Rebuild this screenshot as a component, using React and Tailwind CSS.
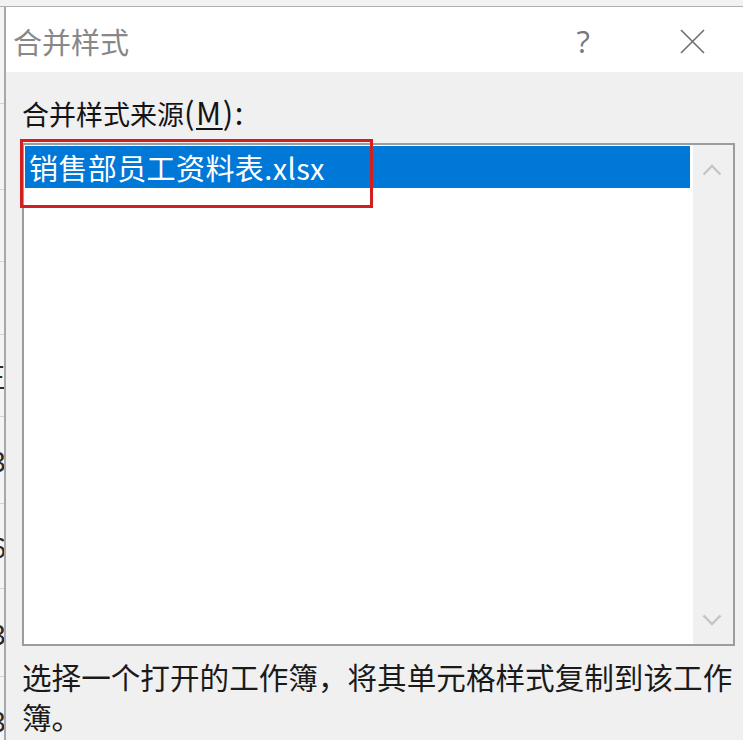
import React from "react";

const cjk = { fontFamily: '"Noto Sans CJK SC", "Noto Sans", sans-serif' };

function SheetStrip() {
  const rows = [
    { h: 97, t: "" },
    { h: 86, t: "" },
    { h: 72, t: "" },
    { h: 73, t: "" },
    { h: 82, t: "王" },
    { h: 87, t: "3" },
    { h: 85, t: "6" },
    { h: 88, t: "3" },
    { h: 87, t: "3" },
  ];
  return (
    <div className="w-[4px] shrink-0 flex flex-col bg-[#f4f4f4] overflow-hidden">
      {rows.map((r, i) => (
        <div
          key={i}
          style={{ height: r.h }}
          className="shrink-0 flex items-center justify-end overflow-hidden border-b border-[#d4d4d4] text-[28px] text-[#2a2a2a] leading-none"
        >
          <span className="shrink-0 mr-[-2px]">{r.t}</span>
        </div>
      ))}
    </div>
  );
}

function Chevron({ up }) {
  return (
    <svg width="20" height="12" viewBox="0 0 20 12" fill="none">
      <path
        d={up ? "M1.5 10.5 L10 2 L18.5 10.5" : "M1.5 1.5 L10 10 L18.5 1.5"}
        stroke="#c4c4c4"
        strokeWidth="2.4"
      />
    </svg>
  );
}

export default function App() {
  return (
    <div className="w-[743px] h-[740px] overflow-hidden flex flex-col bg-[#f0f0f0]" style={cjk}>
      <div className="h-[7px] shrink-0 bg-[#f2f2f2] border-b border-[#b0b0b0]" />
      <div className="flex flex-1 min-h-0">
        <SheetStrip />
        <div className="flex-1 flex flex-col border-l-[2px] border-[#a8a8a8] bg-[#f0f0f0] relative">
          {/* title bar */}
          <div className="h-[65px] shrink-0 bg-white flex items-center pl-[7px] pr-[38px] pt-[3px]">
            <div className="flex-1 text-[29px] leading-none text-[#888888]">合并样式</div>
            <div
              className="text-[31px] leading-none text-[#777777] mr-[90px]"
              style={{ fontFamily: '"Open Sans", "Noto Sans", sans-serif' }}
            >
              ?
            </div>
            <svg width="25" height="25" viewBox="0 0 25 25" fill="none">
              <path d="M1 1 L24 24 M24 1 L1 24" stroke="#6e6e6e" strokeWidth="1.6" />
            </svg>
          </div>
          {/* body */}
          <div className="flex-1 flex flex-col pl-[16px]">
            <div className="mt-[25px] h-[30px] leading-[30px] text-[27px] text-[#141414] whitespace-nowrap">
              合并样式来源
              <span className="text-[31px] tracking-[1.5px]">
                (<span className="underline underline-offset-[3px] decoration-[2px]">M</span>):
              </span>
            </div>
            <div className="mt-[16px] w-[713px] h-[503px] border-[2px] border-[#9c9c9c] bg-white flex">
              <div className="flex-1 pt-[1px] pl-[1px] pr-[3px]">
                <div className="h-[42px] bg-[#0078d7] text-white text-[29px] leading-[42px] pl-[4px] tracking-[0.4px]">
                  销售部员工资料表.xlsx
                </div>
              </div>
              <div className="w-[40px] bg-[#f0f0f0] flex flex-col justify-between">
                <div className="h-[50px] flex items-center justify-center pr-[2px]">
                  <Chevron up />
                </div>
                <div className="h-[48px] flex items-center justify-center pr-[2px]">
                  <Chevron />
                </div>
              </div>
            </div>
            <div className="mt-[11px] w-[720px] text-[29.6px] leading-[40px] text-[#1a1a1a]">
              选择一个打开的工作簿，将其单元格样式复制到该工作簿。
            </div>
          </div>
          {/* red highlight annotation */}
          <div className="absolute left-[14px] top-[132px] w-[353px] h-[69px] border-[3px] border-[#d21f1f]" />
        </div>
      </div>
    </div>
  );
}
